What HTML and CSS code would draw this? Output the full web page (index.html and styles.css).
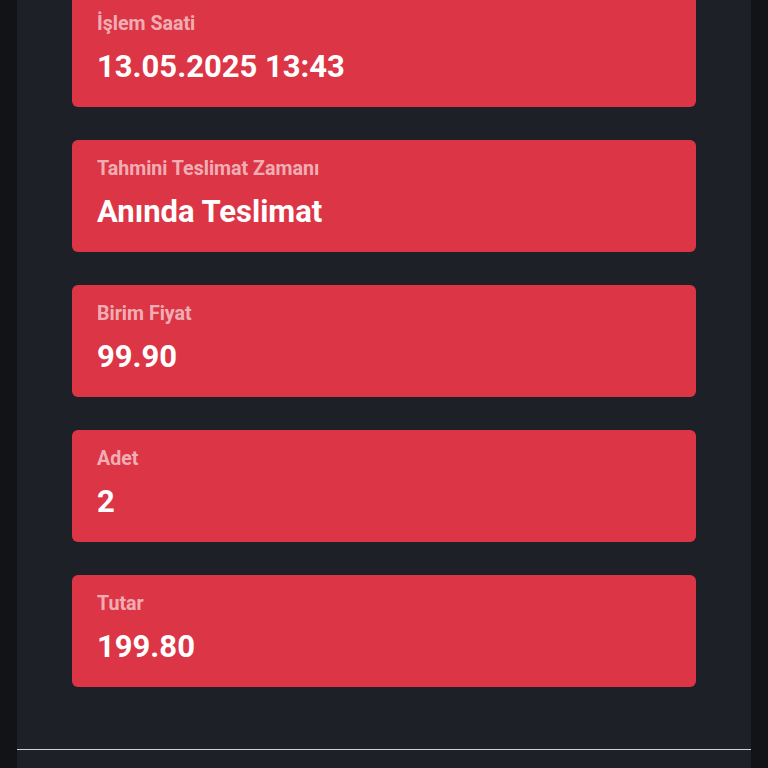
FILE: index.html
```html
<!doctype html>
<html lang="tr">
  <head>
    <meta charset="UTF-8" />
    <meta name="viewport" content="width=device-width, initial-scale=1.0" />
    <title>Sipariş Detayı</title>
    <link rel="stylesheet" href="styles.css">
  </head>
  <body>
    <div class="panel">
      <div class="details">
        <div class="info-card">
          <div class="info-label">İşlem Saati</div>
          <div class="info-value">13.05.2025 13:43</div>
        </div>
        <div class="info-card">
          <div class="info-label">Tahmini Teslimat Zamanı</div>
          <div class="info-value">Anında Teslimat</div>
        </div>
        <div class="info-card">
          <div class="info-label">Birim Fiyat</div>
          <div class="info-value">99.90</div>
        </div>
        <div class="info-card">
          <div class="info-label">Adet</div>
          <div class="info-value">2</div>
        </div>
        <div class="info-card">
          <div class="info-label">Tutar</div>
          <div class="info-value">199.80</div>
        </div>
      </div>
      <hr class="divider" />
    </div>
  </body>
</html>
```

FILE: styles.css
```css
html,
body {
  height: 100%;
}

body {
  margin: 0;
  background-color: #111317;
  font-family: Roboto, "Noto Sans", sans-serif;
  overflow: hidden;
}

.panel {
  display: flow-root;
  width: 734px;
  min-height: 100%;
  margin: 0 auto;
  background-color: #1e2028;
}

.details {
  margin-top: -5px;
  padding: 0 55px;
}

.info-card {
  background-color: #dc3545;
  border-radius: 6px;
  padding: 19px 25px 23px;
  margin-bottom: 33px;
}

.info-card:last-child {
  margin-bottom: 0;
}

.info-label {
  font-size: 19.6px;
  line-height: 20px;
  font-weight: 700;
  color: rgba(255, 255, 255, 0.62);
  margin-bottom: 15px;
}

.info-value {
  font-size: 31px;
  line-height: 35px;
  font-weight: 700;
  color: #fff;
}

.divider {
  margin: 62px 0 0;
  border: none;
  border-top: 1px solid #d0d2d8;
}
```
